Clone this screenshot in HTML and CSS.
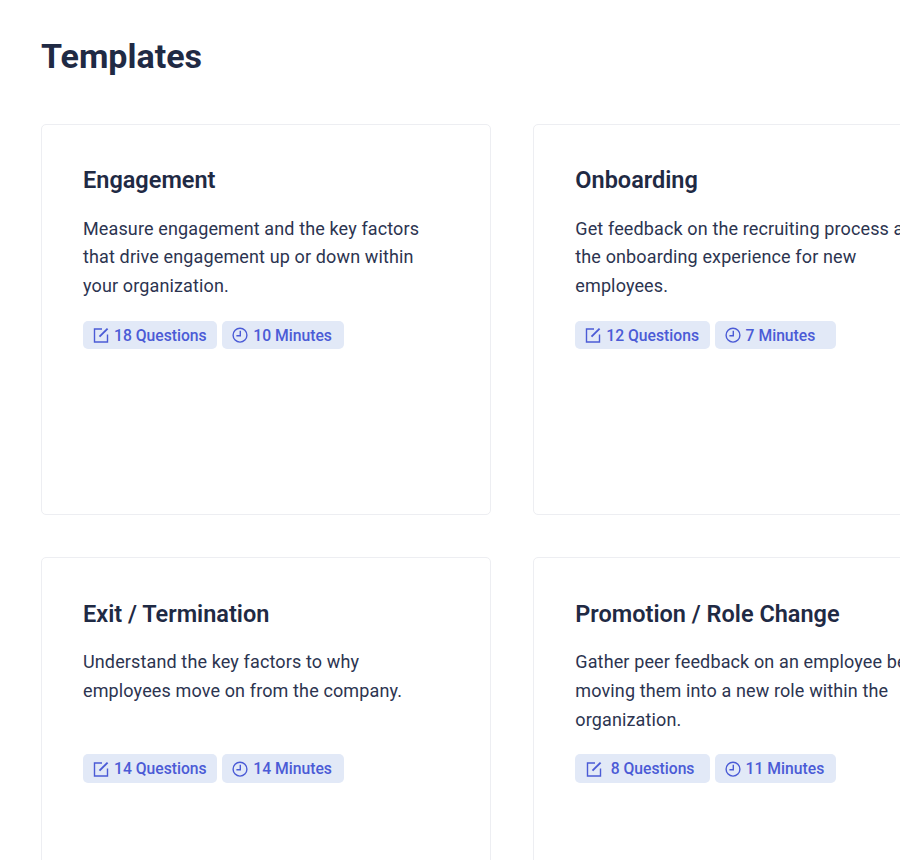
FILE: index.html
```html
<!DOCTYPE html>
<html lang="en">
<head>
<meta charset="utf-8">
<title>Templates</title>
<link rel="stylesheet" href="styles.css">
</head>
<body>
<main class="page">
  <h1 class="page-title">Templates</h1>
  <div class="grid">
    <section class="card">
      <h2 class="card-title">Engagement</h2>
      <p class="card-text">Measure engagement and the key factors that drive engagement up or down within your organization.</p>
      <div class="pills">
        <span class="pill pill-q"><svg class="icon" viewBox="0 0 16 16"><path d="M9 2H1.5v13H14.5V7.5"/><path class="nib" d="M6.5 9.7L14.6 1.6"/></svg>18 Questions</span>
        <span class="pill pill-m"><svg class="icon" viewBox="0 0 16 16"><circle cx="8" cy="8.2" r="6.9"/><path d="M8.3 3.8v4.9H4.4"/></svg>10 Minutes</span>
      </div>
    </section>
    <section class="card">
      <h2 class="card-title">Onboarding</h2>
      <p class="card-text">Get feedback on the recruiting process and the onboarding experience for new employees.</p>
      <div class="pills">
        <span class="pill pill-q"><svg class="icon" viewBox="0 0 16 16"><path d="M9 2H1.5v13H14.5V7.5"/><path class="nib" d="M6.5 9.7L14.6 1.6"/></svg>12 Questions</span>
        <span class="pill pill-m"><svg class="icon" viewBox="0 0 16 16"><circle cx="8" cy="8.2" r="6.9"/><path d="M8.3 3.8v4.9H4.4"/></svg>7 Minutes</span>
      </div>
    </section>
    <section class="card">
      <h2 class="card-title">Exit / Termination</h2>
      <p class="card-text">Understand the key factors to why employees move on from the company.</p>
      <div class="pills">
        <span class="pill pill-q"><svg class="icon" viewBox="0 0 16 16"><path d="M9 2H1.5v13H14.5V7.5"/><path class="nib" d="M6.5 9.7L14.6 1.6"/></svg>14 Questions</span>
        <span class="pill pill-m"><svg class="icon" viewBox="0 0 16 16"><circle cx="8" cy="8.2" r="6.9"/><path d="M8.3 3.8v4.9H4.4"/></svg>14 Minutes</span>
      </div>
    </section>
    <section class="card">
      <h2 class="card-title">Promotion / Role Change</h2>
      <p class="card-text">Gather peer feedback on an employee before moving them into a new role within the organization.</p>
      <div class="pills">
        <span class="pill pill-q pill-wide"><svg class="icon" viewBox="0 0 16 16"><path d="M9 2H1.5v13H14.5V7.5"/><path class="nib" d="M6.5 9.7L14.6 1.6"/></svg>8 Questions</span>
        <span class="pill pill-m"><svg class="icon" viewBox="0 0 16 16"><circle cx="8" cy="8.2" r="6.9"/><path d="M8.3 3.8v4.9H4.4"/></svg>11 Minutes</span>
      </div>
    </section>
  </div>
</main>
</body>
</html>
```
FILE: styles.css
```css
html, body {
  margin: 0;
  padding: 0;
  height: 860px;
  overflow: hidden;
  background: #fff;
}
body {
  font-family: Roboto, "Liberation Sans", sans-serif;
  color: #1f2a44;
}
.page {
  padding: 36px 0 0 41px;
  width: 1100px;
}
.page-title {
  margin: 0 0 47.05px;
  font-size: 34px;
  line-height: 41px;
  font-weight: 700;
  color: #1f2a44;
}
.grid {
  display: grid;
  grid-template-columns: 450px 450px;
  grid-auto-rows: 391px;
  column-gap: 42.3px;
  row-gap: 42.45px;
}
.card {
  box-sizing: border-box;
  padding: 41.2px 41px 0;
  border: 1px solid #edeef2;
  border-radius: 5px;
  background: #fff;
}
.card-title {
  margin: 0 0 19.4px;
  font-size: 23.5px;
  line-height: 29px;
  font-weight: 600;
  color: #1f2a44;
}
.card-text {
  margin: 0 0 19.8px;
  height: 86.4px;
  font-size: 18px;
  line-height: 28.8px;
  font-weight: 400;
  letter-spacing: 0.13px;
  color: #2c3450;
}
.pills {
  display: flex;
  gap: 5px;
}
.pill {
  box-sizing: border-box;
  display: flex;
  align-items: center;
  height: 28.6px;
  padding-left: 10px;
  border-radius: 5px;
  background: #e2e9f7;
  color: #4b5bd6;
  font-size: 15.7px;
  font-weight: 500;
  white-space: nowrap;
}
.pill-q { width: 134.3px; }
.pill-m { width: 121.4px; }
.pill-wide { padding-left: 11px; gap: 3.4px; }
.icon {
  flex: none;
  width: 16px;
  height: 16px;
  margin-right: 5px;
  fill: none;
  stroke: currentColor;
  stroke-width: 1.4;
}
.nib { stroke-width: 1.9; }
```
